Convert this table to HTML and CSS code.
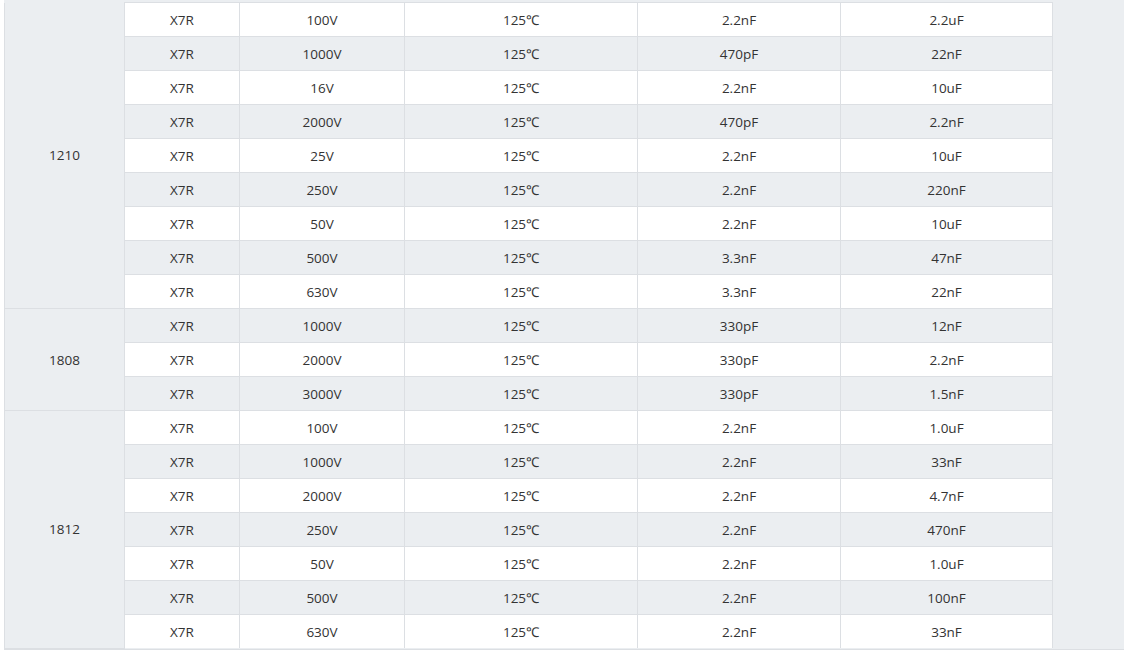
FILE: index.html
```html
<!DOCTYPE html>
<html>
<head>
<meta charset="utf-8">
<link rel="stylesheet" href="styles.css">
</head>
<body>
<div class="wrap">
<table class="spec">
<colgroup>
<col class="c1"><col class="c2"><col class="c3"><col class="c4"><col class="c5"><col class="c6">
</colgroup>
<tbody>
<tr><td class="size" rowspan="9">1210</td><td>X7R</td><td>100V</td><td>125℃</td><td>2.2nF</td><td>2.2uF</td></tr>
<tr><td>X7R</td><td>1000V</td><td>125℃</td><td>470pF</td><td>22nF</td></tr>
<tr><td>X7R</td><td>16V</td><td>125℃</td><td>2.2nF</td><td>10uF</td></tr>
<tr><td>X7R</td><td>2000V</td><td>125℃</td><td>470pF</td><td>2.2nF</td></tr>
<tr><td>X7R</td><td>25V</td><td>125℃</td><td>2.2nF</td><td>10uF</td></tr>
<tr><td>X7R</td><td>250V</td><td>125℃</td><td>2.2nF</td><td>220nF</td></tr>
<tr><td>X7R</td><td>50V</td><td>125℃</td><td>2.2nF</td><td>10uF</td></tr>
<tr><td>X7R</td><td>500V</td><td>125℃</td><td>3.3nF</td><td>47nF</td></tr>
<tr><td>X7R</td><td>630V</td><td>125℃</td><td>3.3nF</td><td>22nF</td></tr>
<tr><td class="size" rowspan="3">1808</td><td>X7R</td><td>1000V</td><td>125℃</td><td>330pF</td><td>12nF</td></tr>
<tr><td>X7R</td><td>2000V</td><td>125℃</td><td>330pF</td><td>2.2nF</td></tr>
<tr><td>X7R</td><td>3000V</td><td>125℃</td><td>330pF</td><td>1.5nF</td></tr>
<tr><td class="size" rowspan="7">1812</td><td>X7R</td><td>100V</td><td>125℃</td><td>2.2nF</td><td>1.0uF</td></tr>
<tr><td>X7R</td><td>1000V</td><td>125℃</td><td>2.2nF</td><td>33nF</td></tr>
<tr><td>X7R</td><td>2000V</td><td>125℃</td><td>2.2nF</td><td>4.7nF</td></tr>
<tr><td>X7R</td><td>250V</td><td>125℃</td><td>2.2nF</td><td>470nF</td></tr>
<tr><td>X7R</td><td>50V</td><td>125℃</td><td>2.2nF</td><td>1.0uF</td></tr>
<tr><td>X7R</td><td>500V</td><td>125℃</td><td>2.2nF</td><td>100nF</td></tr>
<tr><td>X7R</td><td>630V</td><td>125℃</td><td>2.2nF</td><td>33nF</td></tr>
</tbody>
</table>
</div>
</body>
</html>
```

FILE: styles.css
```css
html, body {
  margin: 0;
  padding: 0;
  background: #ffffff;
  overflow: hidden;
}
body {
  font-family: "Open Sans", "Liberation Sans", sans-serif;
  font-size: 13.5px;
  color: #333333;
}
.wrap {
  margin: 0 0 0 4px;
  padding-top: 2px;
  background: #ebeef1;
  border-bottom: 1px solid #dcdfe3;
  width: 1130px;
}
.spec {
  border-collapse: collapse;
  width: 1048px;
  table-layout: fixed;
}
.c1 { width: 120px; }
.c2 { width: 115px; }
.c3 { width: 165px; }
.c4 { width: 233px; }
.c5 { width: 203px; }
.c6 { width: 212px; }
.spec td {
  border: 1px solid #dcdfe3;
  height: 33px;
  padding: 0;
  text-align: center;
  vertical-align: middle;
  line-height: 16px;
  background: #ffffff;
}
.spec tr:nth-child(even) td {
  background: #ebeef1;
}
.spec td.size,
.spec tr td.size {
  background: #ebeef1;
}
.spec tr:first-child td.size {
  border-top: none;
}
.spec tr:last-child td {
  border-bottom: none;
}
```
